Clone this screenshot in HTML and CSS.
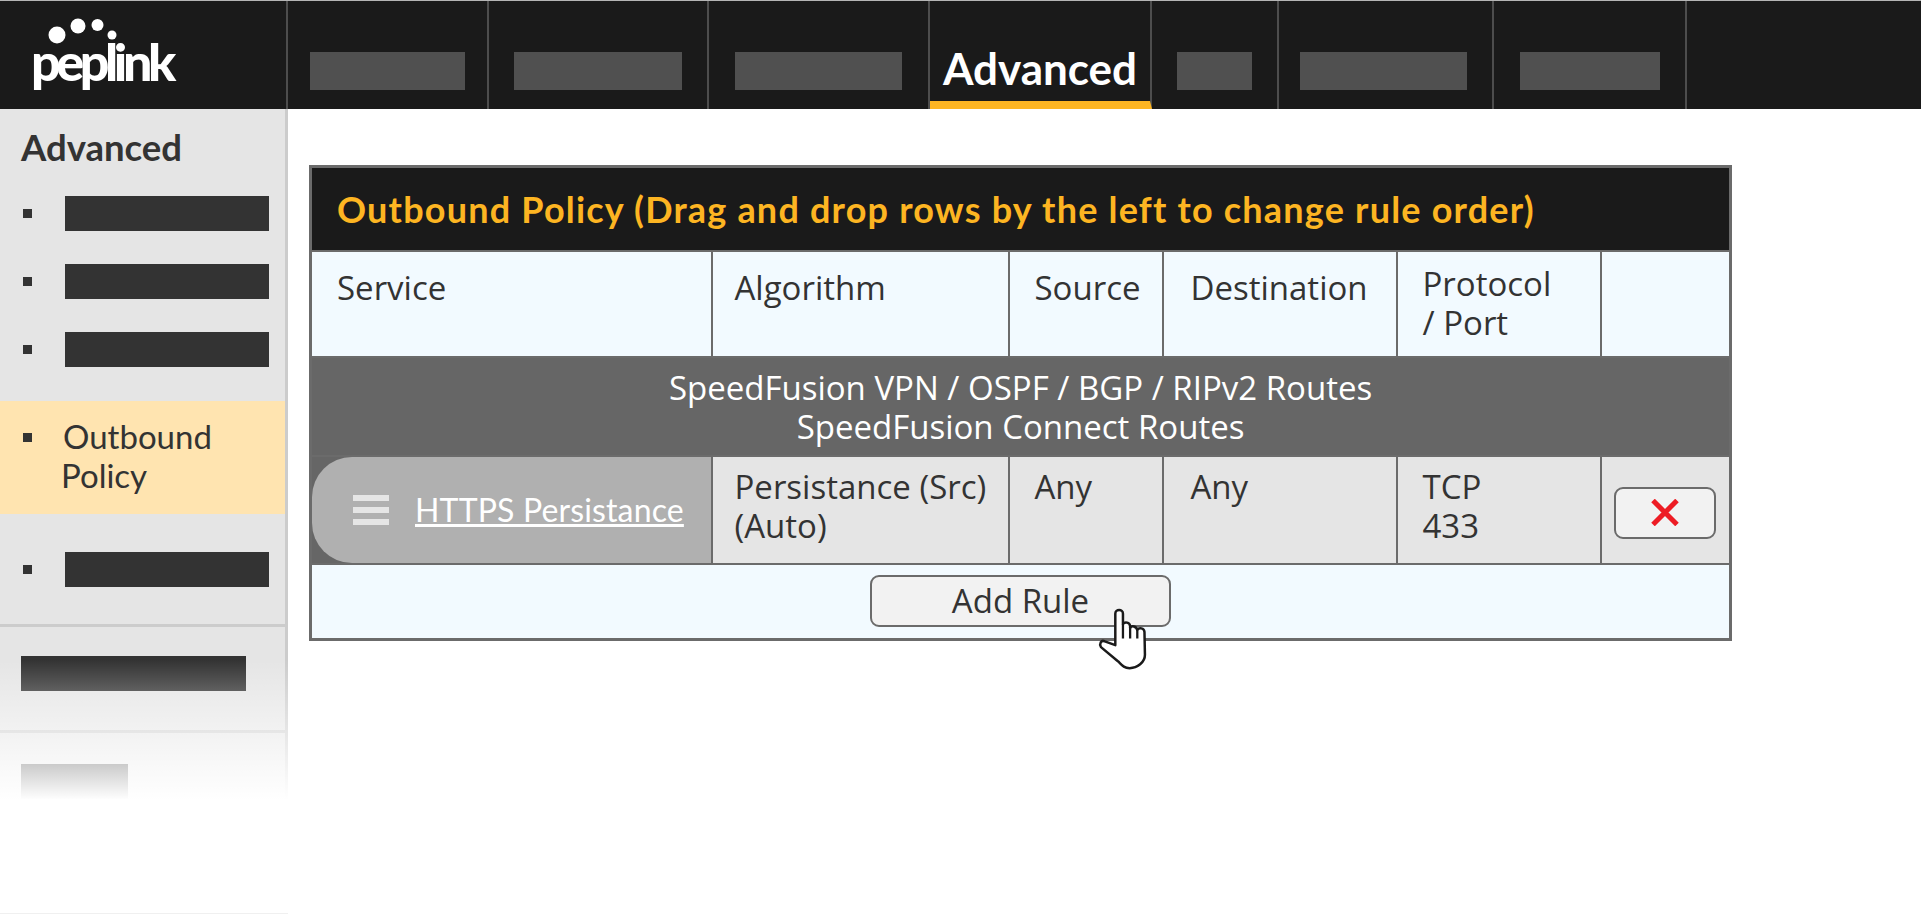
FILE: index.html
```html
<!DOCTYPE html>
<html>
<head>
<meta charset="utf-8">
	<title>Outbound Policy - Peplink</title>
	<link rel="stylesheet" href="styles.css">
</head>
<body>
	<div class="topbar">
		<div class="logo">
			<svg class="logoDots" width="100" height="40" viewBox="0 0 100 40">
				<circle cx="25" cy="23" r="8.5" fill="#fff"/>
				<circle cx="46" cy="14" r="7.5" fill="#fff"/>
				<circle cx="65.5" cy="13" r="6" fill="#fff"/>
				<circle cx="80" cy="23" r="4.5" fill="#fff"/>
			</svg>
			<div class="logoText">peplink</div>
		</div>
		<div class="nav">
			<div class="tab"><div class="navBlock w155"></div></div>
			<div class="tab"><div class="navBlock w168"></div></div>
			<div class="tab"><div class="navBlock w167"></div></div>
			<div class="tab active">Advanced</div>
			<div class="tab"><div class="navBlock w75"></div></div>
			<div class="tab"><div class="navBlock w167 nudge"></div></div>
			<div class="tab"><div class="navBlock w140"></div></div>
		</div>
	</div>
	<div class="main">
		<div class="sidebar">
			<div class="sideTitle">Advanced</div>
			<div class="sideItem"><span class="bullet"></span><span class="sideBar"></span></div>
			<div class="sideItem"><span class="bullet"></span><span class="sideBar"></span></div>
			<div class="sideItem"><span class="bullet"></span><span class="sideBar"></span></div>
			<div class="sideItem current"><span class="bullet"></span><span class="sideText">Outbound<br/>Policy</span></div>
			<div class="sideItem"><span class="bullet"></span><span class="sideBar"></span></div>
			<div class="sideGroup first"><span class="groupBar wide"></span></div>
			<div class="sideGroup"><span class="groupBar short"></span></div>
			<div class="fade"></div>
		</div>
		<div class="content">
			<table class="policy">
				<colgroup>
					<col class="c1"><col class="c2"><col class="c3"><col class="c4"><col class="c5"><col class="c6">
				</colgroup>
				<tr>
					<td class="title" colspan="6">Outbound Policy (Drag and drop rows by the left to change rule order)</td>
				</tr>
				<tr class="head">
					<td class="low">Service</td>
					<td class="low alg">Algorithm</td>
					<td class="low">Source</td>
					<td class="low dest">Destination</td>
					<td>Protocol<br/>/ Port</td>
					<td></td>
				</tr>
				<tr>
					<td class="band" colspan="6">SpeedFusion VPN / OSPF / BGP / RIPv2 Routes<br/>SpeedFusion Connect Routes</td>
				</tr>
				<tr class="rule">
					<td class="serviceCell">
						<div class="service">
							<div class="grip"><span></span><span></span><span></span></div>
							<a class="serviceLink" href="#">HTTPS Persistance</a>
						</div>
					</td>
					<td class="alg">Persistance (Src)<br/>(Auto)</td>
					<td>Any</td>
					<td class="dest">Any</td>
					<td>TCP<br/>433</td>
					<td class="delCell">
						<button class="delBtn">
							<svg width="28" height="27" viewBox="0 0 28 27"><path d="M2 1.5 L26 25.5 M26 1.5 L2 25.5" stroke="#ed1c24" stroke-width="5" fill="none"/></svg>
						</button>
					</td>
				</tr>
				<tr>
					<td class="addRow" colspan="6">
						<button class="addBtn">Add Rule
							<svg class="hand" width="56" height="65" viewBox="14 14 56 68">
								<path d="M35 22 C35 17 43 17 43 22 L43 33 C45 30 50 31 50.5 35 L50.5 37 C52 34 57 35 58 39 C60 36 65 37 65.5 41 L66 65 C66 73 58 79 50 79 C44 79 42 76 38 72 L20 57 C18 54 20 49 24 51 L35 55 Z" fill="#fff" stroke="#1a1a1a" stroke-width="2.6" stroke-linejoin="round"/>
								<path d="M43 33 L43 48 M50.5 36 L50.5 48 M58 39 L58 48" fill="none" stroke="#1a1a1a" stroke-width="2.4"/>
							</svg>
						</button>
					</td>
				</tr>
			</table>
		</div>
	</div>
</body>
</html>
```

FILE: styles.css
```css
body{
	margin: 0px;
	padding: 0px;
	background-color: #fff;
	font-family: "Open Sans", "Liberation Sans", sans-serif;
	color: #333;
	overflow: hidden;
}
.topbar{
	display: flex;
	height: 108px;
	background-color: #1a1a1a;
	border-top: 1px solid #b5b5b5;
}
.logo{
	position: relative;
	width: 288px;
	flex-shrink: 0;
	box-sizing: border-box;
	padding: 32px 0 0 31px;
	border-right: 2px solid #4d4d4d;
}
.logoDots{
	position: absolute;
	left: 32px;
	top: 11px;
}
.logoText{
	font-family: "Lato", sans-serif;
	font-weight: 900;
	font-size: 52px;
	line-height: 56px;
	letter-spacing: -4.4px;
	color: #fff;
}
.nav{
	display: grid;
	grid-template-columns: 201px 220px 221px 222px 127px 215px 193px;
}
.tab{
	box-sizing: border-box;
	display: flex;
	justify-content: center;
	padding-top: 51px;
	border-right: 2px solid #4d4d4d;
}
.tab.active{
	padding-top: 41px;
	border-bottom: 8px solid #fdb522;
	font-family: "Lato", sans-serif;
	font-weight: 700;
	font-size: 44px;
	line-height: 52px;
	color: #fff;
}
.navBlock{
	height: 38px;
	background-color: #505050;
}
.w155{ width: 155px; }
.w168{ width: 168px; }
.w167{ width: 167px; }
.w75{ width: 75px; }
.w140{ width: 140px; }
.nudge{ margin-right: 5px; }

.main{
	display: flex;
	height: 805px;
}
.sidebar{
	position: relative;
	width: 288px;
	flex-shrink: 0;
	box-sizing: border-box;
	background-color: #e5e5e5;
	border-right: 3px solid #ccc;
	padding-top: 16px;
}
.sideTitle{
	padding-left: 21px;
	height: 54px;
	font-family: "Lato", sans-serif;
	font-weight: 700;
	font-size: 36.5px;
	line-height: 44px;
	color: #333;
}
.sideItem{
	display: flex;
	align-items: center;
	gap: 33px;
	height: 68px;
	padding-left: 23px;
}
.bullet{
	width: 9px;
	height: 9px;
	flex-shrink: 0;
	background-color: #333;
}
.sideBar{
	width: 204px;
	height: 35px;
	background-color: #333;
}
.sideItem.current{
	height: auto;
	margin: 18px 0 21px 0;
	padding-top: 16px;
	padding-bottom: 19px;
	align-items: flex-start;
	background-color: #ffe4b0;
}
.current .bullet{
	margin-top: 16px;
}
.sideText{
	margin-left: -4px;
	text-indent: 2px;
	font-family: "Lato", sans-serif;
	font-size: 33px;
	line-height: 39px;
	color: #333;
}
.sideGroup{
	height: 106px;
	border-top: 3px solid #ccc;
	padding: 31px 0 0 21px;
	box-sizing: border-box;
}
.sideGroup.first{
	margin-top: 21px;
	padding-top: 29px;
}
.groupBar{
	display: block;
	height: 35px;
	background-color: #333;
}
.groupBar.wide{ width: 225px; }
.groupBar.short{ width: 107px; }
.fade{
	position: absolute;
	left: 0;
	right: -3px;
	top: 551px;
	bottom: 0;
	background: linear-gradient(to bottom, rgba(255,255,255,0) 0, #fff 140px);
	border-bottom: 1px solid #f0f0f0;
}

.content{
	padding: 56px 0 0 21px;
}
.policy{
	table-layout: fixed;
	width: 1420px;
	border-collapse: collapse;
	border: 3px solid #6b6b6b;
	font-size: 33px;
	line-height: 39px;
	color: #333;
}
.c1{ width: 401px; }
.c2{ width: 297px; }
.c3{ width: 154px; }
.c4{ width: 234px; }
.c5{ width: 204px; }
.c6{ width: 130px; }
.policy td{
	border: 2px solid #6b6b6b;
	padding: 0 0 0 25px;
	vertical-align: top;
}
.policy td.alg{
	padding-left: 22px;
}
.policy td.dest{
	padding-left: 27px;
}
.policy td.title{
	height: 84px;
	padding: 2px 0 0 25px;
	box-sizing: border-box;
	vertical-align: middle;
	background-color: #1a1a1a;
	font-family: "Lato", sans-serif;
	font-weight: 700;
	font-size: 36px;
	letter-spacing: 1.2px;
	color: #fdb522;
}
.head td{
	height: 92px;
	padding-top: 12px;
	background-color: #f2faff;
}
.policy .head td.low{
	padding-top: 16px;
	height: 88px;
}
.policy td.band{
	height: 87px;
	padding: 10px 0 0 0;
	text-align: center;
	background-color: #666;
	color: #fff;
}
.rule td{
	height: 96px;
	padding-top: 10px;
	background-color: #e5e5e5;
}
.policy .rule td.serviceCell{
	height: 106px;
	padding: 0;
	background-color: #666;
}
.service{
	display: flex;
	align-items: center;
	gap: 26px;
	height: 106px;
	padding-left: 41px;
	border-radius: 40px 0 0 40px;
	background-color: #b0b0b0;
}
.grip{
	display: flex;
	flex-direction: column;
	gap: 6px;
	width: 36px;
}
.grip span{
	height: 6px;
	background-color: #e5e5e5;
}
.serviceLink{
	font-family: "Lato", sans-serif;
	font-size: 32px;
	letter-spacing: 0.15px;
	color: #fff;
}
.policy .rule td.delCell{
	height: 76px;
	padding: 30px 0 0 12px;
}
.delBtn{
	display: block;
	width: 102px;
	height: 52px;
	padding: 0;
	background-color: #f2f2f2;
	border: 2px solid #6b6b6b;
	border-radius: 9px;
}
.delBtn svg{
	display: block;
	margin: 0 auto;
}
.policy td.addRow{
	height: 63px;
	padding: 10px 0 0 0;
	text-align: center;
	background-color: #f2faff;
}
.addBtn{
	position: relative;
	width: 301px;
	height: 52px;
	padding: 0;
	background-color: #f2f2f2;
	border: 2px solid #6b6b6b;
	border-radius: 9px;
	font-family: "Open Sans", "Liberation Sans", sans-serif;
	font-size: 33px;
	line-height: 39px;
	color: #333;
}
.hand{
	position: absolute;
	left: 222px;
	top: 29px;
}
```
